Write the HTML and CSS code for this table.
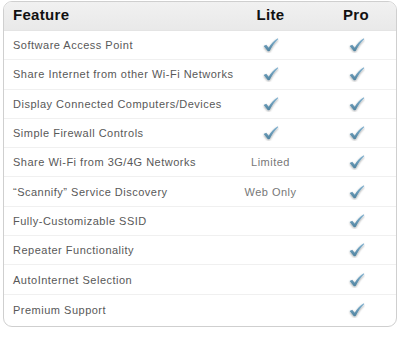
FILE: index.html
```html
<!DOCTYPE html>
<html>
<head>
<meta charset="utf-8">
<link rel="stylesheet" href="styles.css">
</head>
<body>
<svg width="0" height="0" class="defs">
  <defs>
    <linearGradient id="cg" x1="0" y1="0" x2="0" y2="1">
      <stop offset="0" stop-color="#86b5d2"/>
      <stop offset="1" stop-color="#4f829f"/>
    </linearGradient>
    <filter id="sh" x="-30%" y="-30%" width="160%" height="170%">
      <feGaussianBlur in="SourceAlpha" stdDeviation="0.9"/>
      <feOffset dx="0" dy="1.3" result="b"/>
      <feComponentTransfer><feFuncA type="linear" slope="0.4"/></feComponentTransfer>
      <feMerge><feMergeNode/><feMergeNode in="SourceGraphic"/></feMerge>
    </filter>
    <symbol id="chk" viewBox="0 0 16 15">
      <path d="M1.5 8.5 L4 7.3 L6.3 10 C8.5 6.5 11 3.5 14.8 1.2 L15.2 2 C12 4.8 9.4 8.6 7.2 13.2 L5.6 13.4 Z" fill="url(#cg)" filter="url(#sh)"/>
    </symbol>
  </defs>
</svg>
<div class="table">
  <div class="row head">
    <div class="feat">Feature</div>
    <div class="col">Lite</div>
    <div class="col">Pro</div>
  </div>
  <div class="row">
    <div class="feat">Software Access Point</div>
    <div class="col"><svg class="ck"><use href="#chk"/></svg></div>
    <div class="col"><svg class="ck"><use href="#chk"/></svg></div>
  </div>
  <div class="row">
    <div class="feat">Share Internet from other Wi-Fi Networks</div>
    <div class="col"><svg class="ck"><use href="#chk"/></svg></div>
    <div class="col"><svg class="ck"><use href="#chk"/></svg></div>
  </div>
  <div class="row">
    <div class="feat">Display Connected Computers/Devices</div>
    <div class="col"><svg class="ck"><use href="#chk"/></svg></div>
    <div class="col"><svg class="ck"><use href="#chk"/></svg></div>
  </div>
  <div class="row">
    <div class="feat">Simple Firewall Controls</div>
    <div class="col"><svg class="ck"><use href="#chk"/></svg></div>
    <div class="col"><svg class="ck"><use href="#chk"/></svg></div>
  </div>
  <div class="row">
    <div class="feat">Share Wi-Fi from 3G/4G Networks</div>
    <div class="col note">Limited</div>
    <div class="col"><svg class="ck"><use href="#chk"/></svg></div>
  </div>
  <div class="row">
    <div class="feat">“Scannify” Service Discovery</div>
    <div class="col note">Web Only</div>
    <div class="col"><svg class="ck"><use href="#chk"/></svg></div>
  </div>
  <div class="row">
    <div class="feat">Fully-Customizable SSID</div>
    <div class="col"></div>
    <div class="col"><svg class="ck"><use href="#chk"/></svg></div>
  </div>
  <div class="row">
    <div class="feat">Repeater Functionality</div>
    <div class="col"></div>
    <div class="col"><svg class="ck"><use href="#chk"/></svg></div>
  </div>
  <div class="row">
    <div class="feat">AutoInternet Selection</div>
    <div class="col"></div>
    <div class="col"><svg class="ck"><use href="#chk"/></svg></div>
  </div>
  <div class="row last">
    <div class="feat">Premium Support</div>
    <div class="col"></div>
    <div class="col"><svg class="ck"><use href="#chk"/></svg></div>
  </div>
</div>
</body>
</html>
```
FILE: styles.css
```css
html, body {
  margin: 0;
  padding: 0;
  background: #ffffff;
}
body {
  padding: 1px 3px 0 3px;
  font-family: "Liberation Sans", Arial, sans-serif;
}
.defs {
  position: absolute;
  width: 0;
  height: 0;
}
.table {
  width: 394px;
  box-sizing: border-box;
  border: 1px solid #cfcfcf;
  border-radius: 9px;
  background: #fff;
  overflow: hidden;
}
.row {
  display: grid;
  grid-template-columns: 221px 91px 1fr;
  align-items: center;
  height: 29.3px;
  border-bottom: 1px solid #f0f0f0;
  box-sizing: border-box;
}
.row.last {
  border-bottom: none;
  height: 31px;
}
.row.head {
  height: 29px;
  padding-bottom: 3px;
  background: linear-gradient(#f1f1f1, #e9e9e9);
  border-bottom: 1px solid #e4e4e4;
}
.feat {
  padding-left: 9px;
  font-size: 11px;
  letter-spacing: 0.5px;
  color: #585858;
  white-space: nowrap;
}
.col {
  text-align: center;
  display: flex;
  justify-content: center;
  align-items: center;
}
.head .feat, .head .col {
  font-size: 15px;
  font-weight: bold;
  color: #111;
  letter-spacing: 0.3px;
}
.note {
  font-size: 11px;
  color: #777;
  letter-spacing: 0.5px;
}
.ck {
  width: 17px;
  height: 16px;
}
```
